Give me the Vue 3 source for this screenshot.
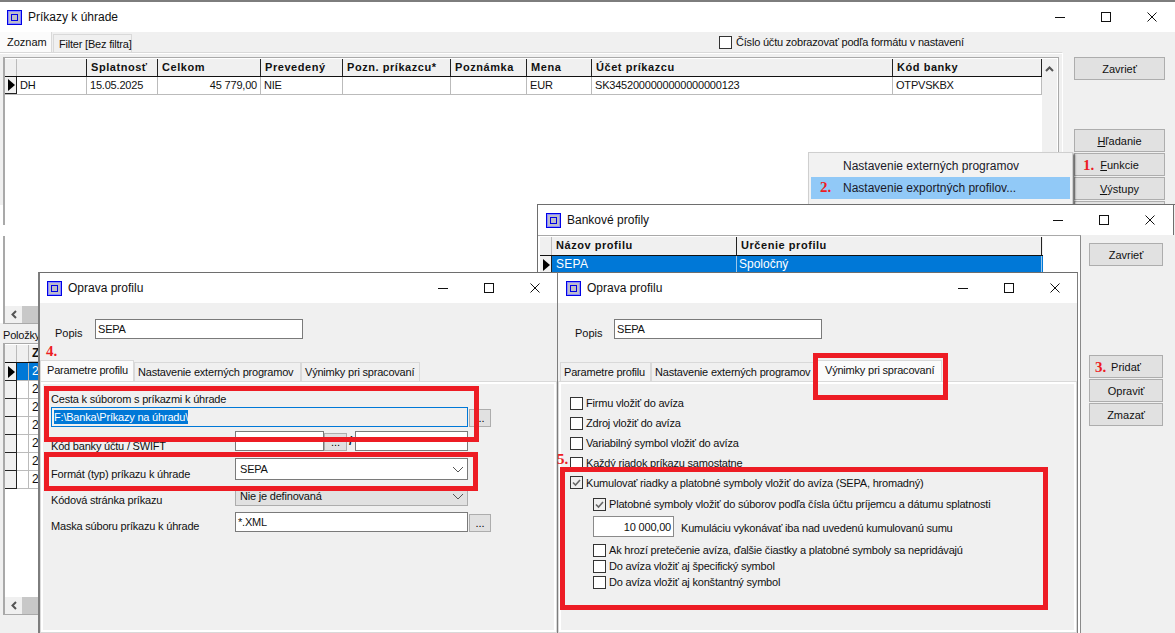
<script setup>
const cols1 = [
  { t: '', w: 70 }, { t: 'Splatnosť', w: 71 }, { t: 'Celkom', w: 103 }, { t: 'Prevedený', w: 82 },
  { t: 'Pozn. príkazcu*', w: 108 }, { t: 'Poznámka', w: 76 }, { t: 'Mena', w: 65 }, { t: 'Účet príkazcu', w: 301 }, { t: 'Kód banky', w: 149 }
]
const row1 = ['DH', '15.05.2025', '45 779,00', 'NIE', '', '', 'EUR', 'SK3452000000000000000123', 'OTPVSKBX']
const sideRows = [1, 2, 3, 4, 5, 6, 7]
const tabs = ['Parametre profilu', 'Nastavenie externých programov', 'Výnimky pri spracovaní']
const topChecks = ['Firmu vložiť do avíza', 'Zdroj vložiť do avíza', 'Variabilný symbol vložiť do avíza', 'Každý riadok príkazu samostatne']
const lowChecks = ['Ak hrozí pretečenie avíza, ďalšie čiastky a platobné symboly sa nepridávajú', 'Do avíza vložiť aj špecifický symbol', 'Do avíza vložiť aj konštantný symbol']
const redBoxes = [
  { l: 44, t: 386, w: 435, h: 56 }, { l: 44, t: 452, w: 434, h: 39 },
  { l: 813, t: 353, w: 135, h: 47 }, { l: 560, t: 467, w: 488, h: 143 }
]
const marks = [
  { n: '1.', l: 1083, t: 157 }, { n: '2.', l: 820, t: 179 }, { n: '3.', l: 1095, t: 359 },
  { n: '4.', l: 46, t: 343 }, { n: '5.', l: 557, t: 451 }
]
const px = (b) => ({ left: b.l + 'px', top: b.t + 'px', width: b.w + 'px', height: b.h + 'px' })
const pos = (m) => ({ left: m.l + 'px', top: m.t + 'px' })
</script>

<template>
  <div class="root">
    <!-- main window -->
    <div class="win win1">
      <div class="title">
        <svg class="appicon" width="15" height="15" viewBox="0 0 15 15"><rect width="15" height="15" fill="#0000e6"/><rect x="1" y="1" width="13" height="13" fill="#8a8cff"/><rect x="2" y="2" width="11" height="11" fill="#bdbdc8"/><rect x="4.5" y="4.5" width="6" height="6" fill="#bdbdc8" stroke="#0000e6"/></svg>
        <span class="title-text">Príkazy k úhrade</span>
        <span class="controls">
          <span class="ctl"><svg width="10" height="10" viewBox="0 0 10 10"><path d="M0 5.5h10" stroke="#111"/></svg></span>
          <span class="ctl"><svg width="10" height="10" viewBox="0 0 10 10"><rect x=".5" y=".5" width="9" height="9" fill="none" stroke="#111"/></svg></span>
          <span class="ctl"><svg width="10" height="10" viewBox="0 0 10 10"><path d="M.5.5l9 9M9.5.5l-9 9" stroke="#111"/></svg></span>
        </span>
      </div>
      <div class="tabrow1">
        <span class="tab1 on">Zoznam</span>
        <span class="tab1">Filter [Bez filtra]</span>
        <label class="topcheck"><span class="cb"></span>Číslo účtu zobrazovať podľa formátu v nastavení</label>
      </div>
      <div class="body1">
        <div class="left1">
          <div class="grid grid1">
            <div class="grid-main">
              <div class="gcontent">
                <div class="ghead">
                  <span class="ind hd"></span>
                  <span v-for="c in cols1" :key="c.t" class="hcell" :style="{ width: c.w + 'px' }">{{ c.t }}</span>
                </div>
                <div class="grow1">
                  <span class="ind"><i class="tri"></i></span>
                  <span v-for="(v, i) in row1" :key="i" class="cell" :class="{ num: i === 2 }" :style="{ width: cols1[i].w + 'px' }">{{ v }}</span>
                </div>
              </div>
              <div class="vscroll">
                <svg width="9" height="6" viewBox="0 0 9 6"><path d="M1 5l3.5-3.5L8 5" fill="none" stroke="#555" stroke-width="2"/></svg>
              </div>
            </div>
            <div class="hscroll"><span class="arrow"><svg width="6" height="9" viewBox="0 0 6 9"><path d="M5 1L1.5 4.500 5 8" fill="none" stroke="#555" stroke-width="2"/></svg></span><span class="thumb"></span></div>
          </div>
          <div class="sublabel">Položky</div>
          <div class="grid grid2">
            <div class="g2main">
              <div class="g2row head">
                <span class="ind hd"></span><span class="ind hd"></span><span class="zc hb">Z</span>
              </div>
              <div v-for="r in sideRows" :key="r" class="g2row" :class="{ sel: r === 1 }">
                <span class="ind"><i v-if="r === 1" class="tri"></i></span><span class="blank"></span><span class="zc">2</span>
              </div>
            </div>
            <div class="hscroll"><span class="arrow"><svg width="6" height="9" viewBox="0 0 6 9"><path d="M5 1L1.5 4.500 5 8" fill="none" stroke="#555" stroke-width="2"/></svg></span><span class="thumb"></span></div>
          </div>
        </div>
        <div class="right1">
          <button class="btn">Zavrieť</button>
          <div class="btnstack">
            <button class="btn"><u>H</u>ľadanie</button>
            <button class="btn"><u>F</u>unkcie</button>
            <button class="btn"><u>V</u>ýstupy</button>
            <button class="btn"></button>
          </div>
        </div>
      </div>
    </div>

    <!-- page cut-outs of the composed screenshot -->
    <div class="cut cut-a"></div>
    <div class="cut cut-b"></div>

    <!-- context menu -->
    <div class="menu">
      <div class="mitem">Nastavenie externých programov</div>
      <div class="mitem hot">Nastavenie exportných profilov...</div>
    </div>

    <!-- Bankove profily -->
    <div class="win win2">
      <div class="title tb2">
        <svg class="appicon" width="15" height="15" viewBox="0 0 15 15"><rect width="15" height="15" fill="#0000e6"/><rect x="1" y="1" width="13" height="13" fill="#8a8cff"/><rect x="2" y="2" width="11" height="11" fill="#bdbdc8"/><rect x="4.5" y="4.5" width="6" height="6" fill="#bdbdc8" stroke="#0000e6"/></svg>
        <span class="title-text">Bankové profily</span>
        <span class="controls">
          <span class="ctl"><svg width="10" height="10" viewBox="0 0 10 10"><path d="M0 5.500h10" stroke="#111"/></svg></span>
          <span class="ctl"><svg width="10" height="10" viewBox="0 0 10 10"><rect x=".5" y=".5" width="9" height="9" fill="none" stroke="#111"/></svg></span>
          <span class="ctl"><svg width="10" height="10" viewBox="0 0 10 10"><path d="M.5.5l9 9M9.5.5l-9 9" stroke="#111"/></svg></span>
        </span>
      </div>
      <div class="body2">
        <div class="left2">
          <div class="ghead h2">
            <span class="ind hd"></span>
            <span class="hcell c-a">Názov profilu</span>
            <span class="hcell c-b">Určenie profilu</span>
          </div>
          <div class="grow2">
            <span class="ind"><i class="tri"></i></span>
            <span class="cell c-a">SEPA</span>
            <span class="cell c-b">Spoločný</span>
          </div>
        </div>
        <div class="right2">
          <button class="btn b2">Zavrieť</button>
          <div class="btnstack s2">
            <button class="btn b2">Pridať</button>
            <button class="btn b2">Opraviť</button>
            <button class="btn b2">Zmazať</button>
          </div>
        </div>
      </div>
    </div>

    <!-- Oprava profilu left -->
    <div class="win win3">
      <div class="title tb3">
        <svg class="appicon" width="15" height="15" viewBox="0 0 15 15"><rect width="15" height="15" fill="#0000e6"/><rect x="1" y="1" width="13" height="13" fill="#8a8cff"/><rect x="2" y="2" width="11" height="11" fill="#bdbdc8"/><rect x="4.5" y="4.5" width="6" height="6" fill="#bdbdc8" stroke="#0000e6"/></svg>
        <span class="title-text">Oprava profilu</span>
        <span class="controls">
          <span class="ctl"><svg width="10" height="10" viewBox="0 0 10 10"><path d="M0 5.500h10" stroke="#111"/></svg></span>
          <span class="ctl"><svg width="10" height="10" viewBox="0 0 10 10"><rect x=".5" y=".5" width="9" height="9" fill="none" stroke="#111"/></svg></span>
          <span class="ctl"><svg width="10" height="10" viewBox="0 0 10 10"><path d="M.5.5l9 9M9.5.5l-9 9" stroke="#111"/></svg></span>
        </span>
      </div>
      <div class="popis p3">
        <span class="plabel">Popis</span>
        <span class="input pinput">SEPA</span>
      </div>
      <div class="tabs t3">
        <span v-for="(t, i) in tabs" :key="t" class="tab" :class="{ on: i === 0 }">{{ t }}</span>
      </div>
      <div class="panel form">
        <div class="lbl-top">Cesta k súborom s príkazmi k úhrade</div>
        <div class="frow r-path">
          <span class="input focus"><mark>F:\Banka\Príkazy na úhradu\</mark></span>
          <button class="dots">...</button>
        </div>
        <div class="frow r-kod">
          <span class="flabel">Kód banky účtu / SWIFT</span>
          <span class="input i-a"></span>
          <button class="dots d2">...</button>
          <b class="slash">/</b>
          <span class="input i-b"></span>
        </div>
        <div class="frow r-fmt">
          <span class="flabel">Formát (typ) príkazu k úhrade</span>
          <span class="input sel-box">SEPA<svg width="12" height="7" viewBox="0 0 12 7"><path d="M1 1l5 5 5-5" fill="none" stroke="#555"/></svg></span>
        </div>
        <div class="frow r-kst">
          <span class="flabel">Kódová stránka príkazu</span>
          <span class="input sel-box gray">Nie je definovaná<svg width="12" height="7" viewBox="0 0 12 7"><path d="M1 1l5 5 5-5" fill="none" stroke="#555"/></svg></span>
        </div>
        <div class="frow r-msk">
          <span class="flabel">Maska súboru príkazu k úhrade</span>
          <span class="input i-full">*.XML</span>
          <button class="dots">...</button>
        </div>
      </div>
    </div>

    <!-- Oprava profilu right -->
    <div class="win win4">
      <div class="title tb4">
        <svg class="appicon" width="15" height="15" viewBox="0 0 15 15"><rect width="15" height="15" fill="#0000e6"/><rect x="1" y="1" width="13" height="13" fill="#8a8cff"/><rect x="2" y="2" width="11" height="11" fill="#bdbdc8"/><rect x="4.5" y="4.5" width="6" height="6" fill="#bdbdc8" stroke="#0000e6"/></svg>
        <span class="title-text">Oprava profilu</span>
        <span class="controls">
          <span class="ctl"><svg width="10" height="10" viewBox="0 0 10 10"><path d="M0 5.500h10" stroke="#111"/></svg></span>
          <span class="ctl"><svg width="10" height="10" viewBox="0 0 10 10"><rect x=".5" y=".5" width="9" height="9" fill="none" stroke="#111"/></svg></span>
          <span class="ctl"><svg width="10" height="10" viewBox="0 0 10 10"><path d="M.5.5l9 9M9.5.5l-9 9" stroke="#111"/></svg></span>
        </span>
      </div>
      <div class="popis p4">
        <span class="plabel">Popis</span>
        <span class="input pinput">SEPA</span>
      </div>
      <div class="tabs t4">
        <span v-for="(t, i) in tabs" :key="t" class="tab" :class="{ on: i === 2 }">{{ t }}</span>
      </div>
      <div class="panel checks">
        <label v-for="c in topChecks" :key="c" class="ck top"><span class="cb"></span>{{ c }}</label>
        <label class="ck kum"><span class="cb done"><svg width="11" height="11" viewBox="0 0 11 11"><path d="M2 5.500l2.500 2.500L9 3" fill="none" stroke="#666" stroke-width="1.600"/></svg></span>Kumulovať riadky a platobné symboly vložiť do avíza (SEPA, hromadný)</label>
        <div class="inner">
          <label class="ck"><span class="cb done"><svg width="11" height="11" viewBox="0 0 11 11"><path d="M2 5.500l2.500 2.500L9 3" fill="none" stroke="#666" stroke-width="1.600"/></svg></span>Platobné symboly vložiť do súborov podľa čísla účtu príjemcu a dátumu splatnosti</label>
          <div class="sumrow"><span class="input sum">10 000,00</span><span class="sumlabel">Kumuláciu vykonávať iba nad uvedenú kumulovanú sumu</span></div>
          <label v-for="(c, i) in lowChecks" :key="c" class="ck low" :class="{ first: i === 0 }"><span class="cb"></span>{{ c }}</label>
        </div>
      </div>
    </div>

    <!-- annotations -->
    <div v-for="(b, i) in redBoxes" :key="i" class="redbox" :style="px(b)"></div>
    <span v-for="m in marks" :key="m.n" class="mark" :style="pos(m)">{{ m.n }}</span>
  </div>
</template>

<style>
html, body { margin: 0; background: #fff; overflow: hidden; }
</style>

<style scoped>
* { box-sizing: border-box; }
.root {
  position: relative; width: 1175px; height: 633px; overflow: hidden; background: #fff;
  font-family: "Liberation Sans", Arial, sans-serif; font-size: 11px; letter-spacing: -.2px; color: #111;
}
.win { position: absolute; background: #f0f0f0; display: flex; flex-direction: column; overflow: hidden; }
.win1 { left: 0; top: 0; width: 1175px; height: 633px; border-top: 2px solid #7d7d7d; }
.win2 { left: 537px; top: 204px; width: 638px; height: 429px; border-top: 1px solid #6e6e6e; border-left: 1px solid #6e6e6e; }
.win3 { left: 38px; top: 272px; width: 520px; height: 361px; border-top: 1px solid #6e6e6e; border-left: 2px solid #7d7d7d; border-right: 1px solid #7d7d7d; }
.win4 { left: 557px; top: 272px; width: 521px; height: 361px; border-top: 1px solid #6e6e6e; border-left: 1px solid #7d7d7d; border-right: 1px solid #7d7d7d; }

.title { height: 30px; flex: none; background: #fff; display: flex; align-items: center; padding-left: 7px; }
.tb2 { padding-left: 8px; width: 636px; border-right: 1px solid #6e6e6e; }
.tb3 { padding-left: 7px; }
.tb4 { padding-left: 8px; }
.appicon { flex: none; }
.title-text { margin-left: 6px; font-size: 12px; letter-spacing: 0; color: #111; }
.controls { margin-left: auto; display: flex; }
.ctl { width: 46px; height: 30px; display: flex; align-items: center; justify-content: center; }
.tb3 .controls, .tb4 .controls { margin-right: -1px; }

.tabrow1 { height: 20px; flex: none; display: flex; align-items: flex-end; position: relative; }
.tab1 { width: 79px; height: 18px; padding: 2px 0 0 5px; background: #f0f0f0; border: 1px solid #d9d9d9; border-bottom: 0; margin-left: 1px; line-height: 15px; white-space: nowrap; }
.tab1.on { height: 20px; width: 52px; margin-left: 0; background: #fbfbfb; border: 0; border-right: 1px solid #d9d9d9; padding: 3px 0 0 7px; letter-spacing: 0; }
.topcheck { margin-left: 587px; align-self: center; display: flex; align-items: center; gap: 4px; }
.cb { width: 13px; height: 13px; flex: none; background: #fff; border: 1px solid #333; display: inline-flex; align-items: center; justify-content: center; }
.cb.done { background: #efefef; }

.body1 { flex: 1; display: flex; min-height: 0; }
.left1 { width: 1063px; padding: 4px 3px 0 3px; border-top: 1px solid #d9d9d9; border-right: 1px solid #fff; box-shadow: inset 0 1px 0 #fff; flex: none; }
.grid { border: 2px solid #a9a9a9; border-width: 1px 1px 1px 2px; background: #fff; display: flex; flex-direction: column; padding-top: 1px; }
.grid1 { height: 267px; }
.grid2 { height: 272px; }
.grid-main { flex: 1; display: flex; min-height: 0; }
.gcontent { flex: 1; min-width: 0; }
.ghead { display: flex; height: 18px; background: #f0f0f0; border-bottom: 1px solid #111; }
.grow1 { display: flex; height: 18px; border-bottom: 1px solid #bbb; }
.ind { width: 12px; flex: none; background: #f0f0f0; border-right: 1px solid #222; border-bottom: 1px solid #222; display: flex; align-items: center; padding-left: 3px; }
.ind.hd { border-bottom: 0; border-right: 1px solid #bbb; }
.tri { display: block; width: 0; height: 0; border-left: 7px solid #000; border-top: 6px solid transparent; border-bottom: 6px solid transparent; }
.hcell { flex: none; padding: 1px 0 0 4px; font-weight: 700; letter-spacing: .55px; border-right: 1px solid #222; line-height: 15px; white-space: nowrap; overflow: hidden; }
.cell { flex: none; padding: 1px 0 0 3px; border-right: 1px solid #bbb; line-height: 15px; white-space: nowrap; overflow: hidden; }
.cell.num { text-align: right; padding-right: 3px; }
.vscroll { width: 15px; flex: none; margin-right: 1px; background: #f0f0f0; display: flex; justify-content: center; padding-top: 7px; }
.vscroll svg { display: block; }
.hscroll { height: 17px; flex: none; display: flex; background: #f0f0f0; }
.arrow { width: 17px; display: flex; align-items: center; justify-content: center; }
.thumb { width: 300px; background: #c8c8c8; }

.sublabel { height: 19px; padding-top: 4px; line-height: 14px; }
.g2main { flex: 1; }
.g2row { display: flex; height: 18px; background: #fff; }
.g2row.head { background: #f0f0f0; border-bottom: 1px solid #111; }
.g2row .blank { width: 12px; flex: none; border-right: 1px solid #bbb; border-bottom: 1px solid #bbb; }
.zc { padding-left: 3px; flex: 1; line-height: 17px; font-size: 12px; border-bottom: 1px solid #bbb; }
.zc.hb { font-weight: 700; }
.g2row.sel .blank, .g2row.sel .zc { background: #0078d7; color: #fff; }

.right1 { padding: 5px 0 0 11px; }
.btn { display: flex; align-items: center; justify-content: center; width: 91px; height: 23px; padding: 0; background: #e1e1e1; border: 1px solid #adadad; font: inherit; color: #111; letter-spacing: 0; }
.btnstack { margin-top: 49px; display: flex; flex-direction: column; gap: 1px; }
.btnstack .btn { height: 23px; }

.cut { position: absolute; background: #fff; }
.cut-a { left: 0; top: 205px; width: 3px; height: 118px; }
.cut-b { left: 3px; top: 225px; width: 2px; height: 11px; }

.menu { position: absolute; left: 808px; top: 152px; width: 265px; height: 60px; background: #f2f2f2; border: 1px solid #cfcfcf; padding: 2px; box-shadow: 2px 2px 2px rgba(0,0,0,.5); }
.mitem { height: 22px; padding-left: 32px; line-height: 22px; font-size: 12px; letter-spacing: 0; color: #1a1a2a; }
.mitem.hot { background: #91c9f7; }

.body2 { flex: 1; display: flex; min-height: 0; }
.left2 { width: 543px; flex: none; background: #fff; border-top: 1px solid #a9a9a9; border-right: 1px solid #8a8a8a; padding: 1px 0 0 2px; }
.h2 { width: 503px; height: 19px; }
.grow2 { display: flex; width: 503px; height: 18px; background: #0078d7; color: #fff; }
.grow2 .ind { background: #f0f0f0; }
.c-a { width: 185px; }
.c-b { width: 305px; }
.h2 .hcell:last-child { border-right: 1px solid #222; }
.grow2 .cell { padding-top: 1px; padding-left: 4px; font-size: 12px; letter-spacing: .3px; border-right: 1px solid #9dc7ea; line-height: 15px; }
.grow2 .cell:last-child { padding-left: 2px; letter-spacing: 0; }
.right2 { padding: 8px 0 0 8px; }
.b2 { width: 74px; }
.s2 { margin-top: 89px; }

.popis { display: flex; margin-top: 16px; height: 20px; flex: none; }
.p3 { padding-left: 15px; }
.p4 { padding-left: 17px; }
.plabel { align-self: flex-end; width: 40px; line-height: 14px; margin-bottom: -1px; letter-spacing: 0; }
.p4 .plabel { width: 39px; }
.input { display: flex; align-items: center; background: #fff; border: 1px solid #7a7a7a; padding: 0 2px; height: 20px; line-height: 14px; white-space: nowrap; }
.pinput { width: 208px; }
.tabs { display: flex; align-items: flex-end; height: 21px; margin-top: 21px; flex: none; }
.t3 { padding-left: 0; }
.t4 { padding-left: 2px; }
.tab { height: 19px; padding: 0 2px 0 3px; line-height: 19px; background: #f0f0f0; border: 1px solid #d9d9d9; border-bottom: 0; white-space: nowrap; }
.tab.on { height: 21px; background: #fbfbfb; padding: 0 6px; line-height: 19px; }
.t3 .tab:nth-child(1) { width: 94px; }
.t3 .tab:nth-child(2) { width: 167px; }
.t3 .tab:nth-child(3) { width: 119px; }
.t4 .tab:nth-child(1) { width: 91px; }
.t4 .tab:nth-child(2) { width: 165px; }
.t4 .tab:nth-child(3) { width: 126px; padding-left: 8px; }
.panel { flex: 1; border: 1px solid #d9d9d9; box-shadow: inset 0 0 0 2px #fff; background: #f0f0f0; }

.form { padding: 10px 0 0 10px; }
.lbl-top { height: 15px; line-height: 14px; }
.frow { display: flex; align-items: flex-end; }
.flabel { width: 184px; flex: none; line-height: 13px; margin-bottom: -1px; white-space: nowrap; }
.r-path { margin-top: 0; }
.focus { width: 417px; height: 20px; background: #f0f0f0; border-color: #0078d7; }
mark { background: #0078d7; color: #fff; line-height: 14px; }
.dots { width: 22px; height: 18px; margin-left: 1px; padding: 0; background: #e1e1e1; border: 1px solid #adadad; font: inherit; line-height: 14px; }
.r-kod { margin-top: 4px; height: 20px; }
.r-kod .flabel { margin-bottom: -2px; }
.i-a { width: 89px; }
.d2 { margin-left: 0; width: 23px; }
.slash { width: 8px; align-self: center; padding-left: 2px; font-size: 12px; }
.i-b { width: 113px; }
.r-fmt { margin-top: 7px; height: 22px; }
.sel-box { width: 233px; height: 22px; justify-content: space-between; padding: 0 3px 0 4px; }
.sel-box svg { flex: none; }
.r-kst { margin-top: 6px; height: 20px; }
.gray { height: 20px; background: #e1e1e1; border-color: #adadad; }
.r-msk { margin-top: 6px; height: 20px; }
.i-full { width: 233px; }

.checks { padding: 11px 0 0 11px; }
.ck { display: flex; align-items: center; gap: 3px; white-space: nowrap; height: 16px; }
.ck.top { height: 20px; }
.ck.kum { height: 19px; margin-top: 0; }
.inner { padding: 4px 0 0 23px; }
.sumrow { display: flex; margin-top: 4px; align-items: flex-end; }
.sum { width: 81px; height: 21px; justify-content: flex-end; border-color: #8a8a8a; }
.sumlabel { margin: 0 0 2px 7px; line-height: 14px; }
.low.first { margin-top: 5px; }

.redbox { position: absolute; border: 5px solid #ed1c24; pointer-events: none; }
.mark { position: absolute; font: 700 15px/16px "Liberation Serif", "Times New Roman", serif; letter-spacing: 0; color: #ed1c24; }
</style>
